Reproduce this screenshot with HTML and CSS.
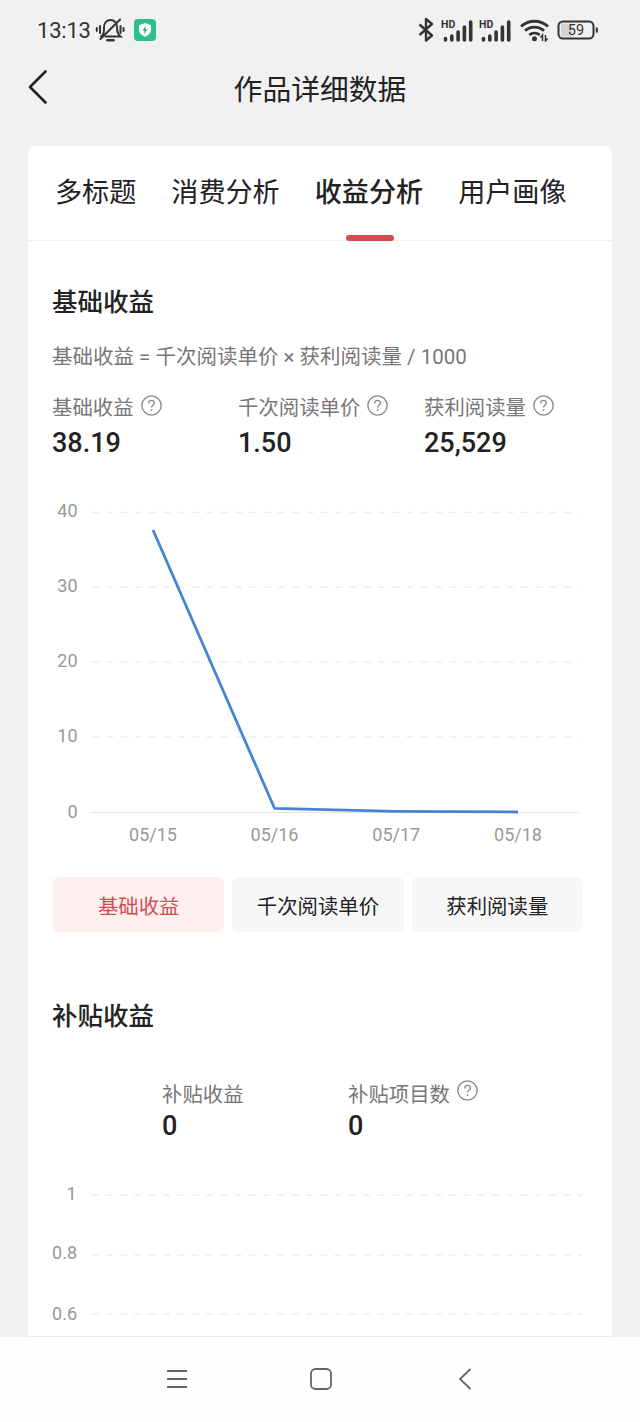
FILE: index.html
```html
<!DOCTYPE html>
<html lang="zh-CN">
<head>
    <meta charset="UTF-8">
    <meta name="viewport" content="width=device-width, initial-scale=1.0">
    <title>作品详细数据</title>
    <link rel="stylesheet" href="styles.css">
</head>
<body>
    <div class="status-bar">
        <span class="status-time">13:13</span>
        <svg class="icon-mute" width="30" height="26" viewBox="0 0 30 26">
            <path d="M6 19.500c3-2 3-4 3-9C9 6 11.500 3 15.500 3S22 6 22 10.500c0 4.500.5 6.500 3.500 9H10.500"/>
            <path d="M5.500 22L25 2.500"/>
            <path class="thick" d="M12.500 23.300h6"/>
            <path d="M5 9v7M1.800 11v3M25.500 9v7M28.500 11v3"/>
        </svg>
        <svg class="icon-guard" width="22" height="22" viewBox="0 0 22 22">
            <rect width="22" height="22" rx="4" fill="#2cc08a"/>
            <path d="M11 4l6 2.200v4.300c0 3.500-2.500 5.800-6 7.300-3.500-1.500-6-3.800-6-7.300V6.200z" fill="#fff"/>
            <path d="M12 7l-3.500 4.500h2.200L10 15l3.500-4.500h-2.200z" fill="#1d9c6c"/>
        </svg>
        <div class="status-right">
            <svg class="icon-bluetooth" width="16" height="26" viewBox="0 0 16 26">
                <path d="M1.500 7.500L14 18.500l-6 5V2l6 5L1.500 18"/>
            </svg>
            <svg class="icon-signal" width="33" height="24" viewBox="0 0 33 24">
                <text x="-1" y="10">HD</text>
                <path d="M3.500 22v-1.500M9.800 22v-4M16.100 22v-8M22.400 22V9M28.700 22V4"/>
            </svg>
            <svg class="icon-signal" width="33" height="24" viewBox="0 0 33 24">
                <text x="-1" y="10">HD</text>
                <path d="M3.500 22v-1.500M9.800 22v-4M16.100 22v-8M22.400 22V9M28.700 22V4"/>
            </svg>
            <svg class="icon-wifi" width="30" height="24" viewBox="0 0 30 24">
                <path d="M1 8.500c7.500-7 19.500-7 27 0M5 12.800c5.500-5 13.500-5 19 0M9.300 17c3-2.600 7.400-2.600 10.400 0"/>
                <circle cx="14.500" cy="20.700" r="2.500"/>
                <path class="arrows" d="M22.500 23v-6l-2 2.500M25.500 17v6l2-2.500"/>
            </svg>
            <svg class="icon-battery" width="42" height="20" viewBox="0 0 42 20">
                <path d="M4 3.500h11v13H4z" fill="#d2d2d2"/>
                <rect x="1.500" y="1.500" width="35" height="17" rx="4.500"/>
                <path d="M39.800 7.500v5"/>
                <text x="19" y="15">59</text>
            </svg>
        </div>
    </div>

    <header class="header">
        <svg class="back-icon" width="20" height="36" viewBox="0 0 20 36">
            <path d="M17.500 2.500L2 18l15.500 15.500"/>
        </svg>
        <h1 class="header-title">作品详细数据</h1>
    </header>

    <main class="card">
        <nav class="tabs">
            <span class="tab">多标题</span>
            <span class="tab">消费分析</span>
            <span class="tab active">收益分析</span>
            <span class="tab">用户画像</span>
        </nav>

        <section class="section">
            <h2 class="section-title">基础收益</h2>
            <p class="formula">基础收益 = 千次阅读单价 × 获利阅读量 / 1000</p>

            <div class="stats">
                <div class="stat">
                    <div class="stat-label">基础收益<svg class="help-icon"><use href="#help-icon"></use></svg></div>
                    <div class="stat-value">38.19</div>
                </div>
                <div class="stat">
                    <div class="stat-label">千次阅读单价<svg class="help-icon"><use href="#help-icon"></use></svg></div>
                    <div class="stat-value">1.50</div>
                </div>
                <div class="stat">
                    <div class="stat-label">获利阅读量<svg class="help-icon"><use href="#help-icon"></use></svg></div>
                    <div class="stat-value">25,529</div>
                </div>
            </div>

            <svg class="chart" width="536" height="360" viewBox="0 0 536 360">
                <g class="grid">
                    <path d="M40 22.500h487M40 97h487M40 172h487M40 247h487"/>
                </g>
                <path class="axis" d="M38 322.500h489"/>
                <g class="y-labels">
                    <text x="25.500" y="27">40</text>
                    <text x="25.500" y="101.500">30</text>
                    <text x="25.500" y="177">20</text>
                    <text x="25.500" y="252">10</text>
                    <text x="25.500" y="327.500">0</text>
                </g>
                <g class="x-labels">
                    <text x="101" y="350.500">05/15</text>
                    <text x="222.500" y="350.500">05/16</text>
                    <text x="344.300" y="350.500">05/17</text>
                    <text x="466" y="350.500">05/18</text>
                </g>
                <polyline class="line" points="101,40 222.500,318.300 344,321.300 466,322"/>
            </svg>

            <div class="buttons">
                <button class="metric-btn selected">基础收益</button>
                <button class="metric-btn">千次阅读单价</button>
                <button class="metric-btn">获利阅读量</button>
            </div>
        </section>

        <section class="section section-subsidy">
            <h2 class="section-title">补贴收益</h2>

            <div class="stats stats-center">
                <div class="stat">
                    <div class="stat-label">补贴收益</div>
                    <div class="stat-value">0</div>
                </div>
                <div class="stat">
                    <div class="stat-label">补贴项目数<svg class="help-icon"><use href="#help-icon"></use></svg></div>
                    <div class="stat-value">0</div>
                </div>
            </div>

            <svg class="chart" width="536" height="157" viewBox="0 0 536 157">
                <g class="grid">
                    <path d="M39.500 16h491M39.500 76h491M39.500 135h491"/>
                </g>
                <g class="y-labels">
                    <text x="24.500" y="20.500">1</text>
                    <text x="25" y="80">0.8</text>
                    <text x="25" y="140.500">0.6</text>
                </g>
            </svg>
        </section>
    </main>

    <footer class="nav-bar">
        <svg width="24" height="24" viewBox="0 0 24 24"><path d="M2 4h20M2 12h20M2 20h20"/></svg>
        <svg width="24" height="24" viewBox="0 0 24 24"><rect x="2" y="2" width="20" height="20" rx="4.500"/></svg>
        <svg width="24" height="24" viewBox="0 0 24 24"><path d="M16.500 2L6 12l10.500 10"/></svg>
    </footer>

    <svg style="display: none;">
        <symbol id="help-icon" viewBox="0 0 20 20">
            <circle cx="10" cy="10" r="9.200"/>
            <path d="M7.300 8c0-3.900 5.500-3.700 5.500-.5 0 2-2.700 2.200-2.700 4.500M10.100 13.600v1.600"/>
        </symbol>
    </svg>
</body>
</html>
```

FILE: styles.css
```css
* {
    box-sizing: border-box;
}

body {
    margin: 0;
    height: 1422px;
    display: flex;
    flex-direction: column;
    overflow: hidden;
    background: #f1f1f1;
    color: #222;
    font-family: Roboto, "Noto Sans CJK SC", sans-serif;
}

h1, h2, p {
    margin: 0;
}

svg {
    flex: none;
    fill: none;
}

/* Status bar */
.status-bar {
    display: flex;
    align-items: center;
    height: 60px;
    padding: 0 40px 0 37px;
    color: #333;
}

.status-time {
    width: 59px;
    font-size: 22px;
    letter-spacing: -0.2px;
    line-height: 60px;
    padding-top: 2px;
}

.icon-mute {
    margin-left: -1px;
    stroke: #333;
    stroke-width: 2;
    stroke-linecap: round;
}

.icon-mute .thick {
    stroke-width: 2.6;
}

.icon-guard {
    margin-left: 9px;
}

.status-right {
    display: flex;
    align-items: center;
    margin-left: auto;
}

.icon-bluetooth {
    margin-right: 8px;
    stroke: #333;
    stroke-width: 2.4;
    stroke-linejoin: round;
}

.icon-signal {
    margin-right: 5px;
    overflow: visible;
    stroke: #333;
    stroke-width: 3.6;
    stroke-linecap: round;
}

.icon-signal text {
    fill: #333;
    stroke: none;
    font-size: 10.5px;
    font-weight: 700;
}

.icon-wifi {
    margin: 0 8px 0 2px;
    stroke: #333;
    stroke-width: 2.8;
}

.icon-wifi circle {
    fill: #333;
    stroke: none;
}

.icon-wifi .arrows {
    stroke-width: 1.5;
}

.icon-battery {
    margin-right: 1px;
    margin-left: -1px;
    stroke: #333;
    stroke-width: 2;
}

.icon-battery path:first-child {
    stroke: none;
}

.icon-battery text {
    fill: #333;
    stroke: none;
    font-size: 14.5px;
    text-anchor: middle;
}

/* Page header */
.header {
    display: grid;
    grid-template-columns: 28px 1fr 28px;
    align-items: center;
    height: 58px;
    padding: 0 28px;
}

.back-icon {
    margin-bottom: 4px;
    stroke: #222;
    stroke-width: 2.6;
    stroke-linecap: round;
    stroke-linejoin: round;
}

.header-title {
    font-size: 28.8px;
    font-weight: 400;
    line-height: 56px;
    padding-top: 2px;
    text-align: center;
}

/* Content card */
.card {
    height: 1191px;
    margin: 28px 28px 0;
    background: #fff;
    border-radius: 7px 7px 0 0;
    border-bottom: 1px solid #eaeaea;
}

.tabs {
    display: flex;
    justify-content: space-between;
    height: 95px;
    padding: 0 45.5px 0 27px;
    border-bottom: 1px solid #f0f0f0;
}

.tab {
    position: relative;
    font-size: 27.1px;
    line-height: 95px;
}

.tab.active {
    font-weight: 500;
}

.tab.active::after {
    content: "";
    position: absolute;
    left: 50%;
    bottom: -1px;
    width: 48px;
    height: 6px;
    margin-left: -23px;
    border-radius: 3px;
    background: #d64b4f;
}

.section {
    padding: 41px 24px 0;
}

.section-title {
    font-size: 25.5px;
    font-weight: 500;
    line-height: 40px;
}

.formula {
    margin-top: 19px;
    font-size: 20.5px;
    line-height: 32px;
    color: #777;
}

.stats {
    display: grid;
    grid-template-columns: repeat(3, 186px);
    margin-top: 20px;
}

.stats-center {
    grid-template-columns: repeat(2, 186px);
    justify-content: center;
    margin-top: 44px;
    padding-left: 56px;
}

.stat-label {
    display: flex;
    height: 31px;
    font-size: 20.4px;
    line-height: 30px;
    color: #777;
}

.help-icon {
    width: 21px;
    height: 21px;
    margin: 2px 0 0 7px;
    stroke: #888;
    stroke-width: 1.3;
}

.stat-value {
    font-size: 27px;
    font-weight: 500;
    line-height: 38px;
}

/* Charts */
.chart {
    display: block;
    margin-top: 28px;
}

.chart text {
    font-size: 18px;
    fill: #999;
}

.grid path {
    stroke: #eee;
    stroke-width: 1.5;
    stroke-dasharray: 7 7.3;
}

.axis {
    stroke: #e4e4e4;
}

.y-labels {
    text-anchor: end;
}

.x-labels {
    text-anchor: middle;
}

.line {
    stroke: #4384d9;
    stroke-width: 2.8;
    stroke-linejoin: round;
}

.buttons {
    display: flex;
    gap: 8px;
    margin: 27px -7px 0 1px;
    width: 530px;
}

.metric-btn {
    flex: 1;
    height: 55px;
    padding: 1px 0 0;
    border: none;
    border-radius: 6px;
    background: #f7f7f7;
    color: #222;
    font-family: inherit;
    font-size: 20.4px;
}

.metric-btn.selected {
    background: #fff0f0;
    color: #d04e52;
}

.section-subsidy {
    padding-top: 64px;
}

.section-subsidy .stat-label {
    height: 29px;
}

.section-subsidy .help-icon {
    margin-top: 0;
}

.section-subsidy .stat-value {
    line-height: 34px;
}

.section-subsidy .chart {
    margin-top: 36px;
}

/* System navigation */
.nav-bar {
    display: flex;
    flex: 1;
    justify-content: center;
    align-items: center;
    gap: 120.5px;
    padding: 0 0 1px 2px;
    background: #fefefe;
    stroke: #666;
    stroke-width: 1.8;
}
```
